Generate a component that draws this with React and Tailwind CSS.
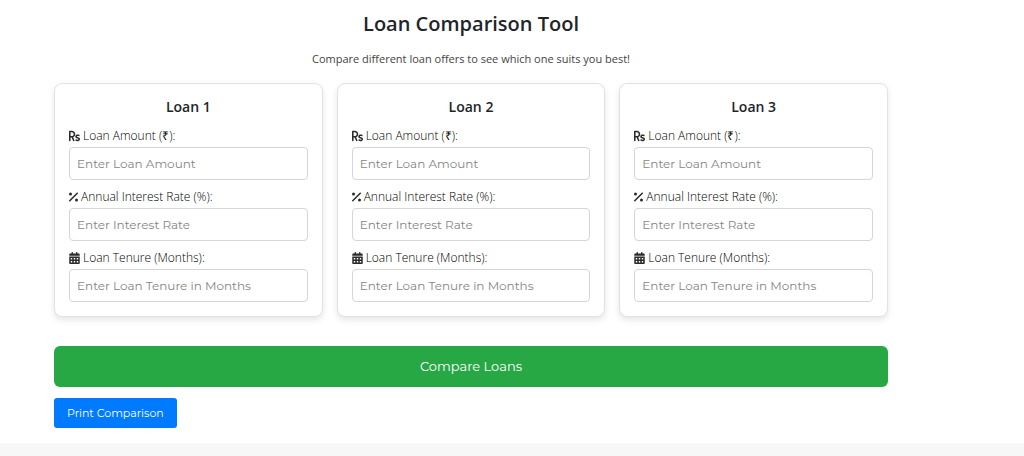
import React, { useState } from 'react';
import { FaRupeeSign, FaPercent, FaCalendarDays } from 'react-icons/fa6';

const fields = [
  {
    key: 'amount',
    label: 'Loan Amount (₹):',
    placeholder: 'Enter Loan Amount',
    icon: <FaRupeeSign preserveAspectRatio="none" strokeWidth="0" className="h-3 w-[11px] text-[#2b2b2b]" />,
  },
  {
    key: 'rate',
    label: 'Annual Interest Rate (%):',
    placeholder: 'Enter Interest Rate',
    icon: <FaPercent className="h-3 w-[9px] text-[#2b2b2b]" />,
  },
  {
    key: 'tenure',
    label: 'Loan Tenure (Months):',
    placeholder: 'Enter Loan Tenure in Months',
    icon: <FaCalendarDays className="h-3 w-[11px] text-[#2b2b2b]" />,
  },
];

const LoanCard = ({ number, loan, onChange }) => (
  <section className="rounded-lg border border-[#e2e2e2] bg-white p-[14px] shadow-[0_3px_6px_rgba(0,0,0,0.1)]">
    <h2 className="mb-[9px] text-center text-sm leading-[18px] font-semibold text-[#212529]">Loan {number}</h2>
    <div className="flex flex-col gap-[6px]">
      {fields.map(({ key, label, placeholder, icon }) => (
        <div key={key}>
          <label
            htmlFor={`${key}-${number}`}
            className="flex items-center gap-[3px] text-xs leading-[22px] font-light text-black"
          >
            {icon}
            {label}
          </label>
          <input
            id={`${key}-${number}`}
            type="number"
            value={loan[key] || ''}
            onChange={(e) => onChange(key, e.target.value)}
            placeholder={placeholder}
            className="block h-[33px] w-full rounded border border-[#d6d6d6] bg-white px-[7px] font-['Montserrat','Inter',sans-serif] text-xs text-[#333] outline-none placeholder:text-[#858585] focus:border-[#007bff]"
          />
        </div>
      ))}
    </div>
  </section>
);

const App = () => {
  const [loans, setLoans] = useState([{}, {}, {}]);

  const updateLoan = (index, key, value) => {
    setLoans(loans.map((loan, i) => (i === index ? { ...loan, [key]: value } : loan)));
  };

  return (
    <div className="min-h-screen bg-[#f7f7f7] font-['Open_Sans',sans-serif]">
      <main className="bg-white pt-2 pr-[136px] pb-[15px] pl-[54px]">
        <h1 className="text-center text-xl leading-8 font-semibold text-[#212529]">Loan Comparison Tool</h1>
        <p className="mt-[9px] text-center text-[11px] leading-5 text-[#444]">
          Compare different loan offers to see which one suits you best!
        </p>

        <div className="mt-[14px] grid grid-cols-3 gap-[14px]">
          {loans.map((loan, i) => (
            <LoanCard key={i} number={i + 1} loan={loan} onChange={(key, value) => updateLoan(i, key, value)} />
          ))}
        </div>

        <button
          type="button"
          className="mt-[29px] block h-[41px] w-full rounded-md bg-[#28a745] font-['Montserrat','Inter',sans-serif] text-[13px] text-white hover:bg-[#218838]"
        >
          Compare Loans
        </button>
        <button
          type="button"
          onClick={() => window.print()}
          className="mt-[11px] block h-[30px] rounded-[3px] bg-[#007bff] px-[13px] font-['Montserrat','Inter',sans-serif] text-[11px] text-white hover:bg-[#0069d9]"
        >
          Print Comparison
        </button>
      </main>
    </div>
  );
};

export default App;
